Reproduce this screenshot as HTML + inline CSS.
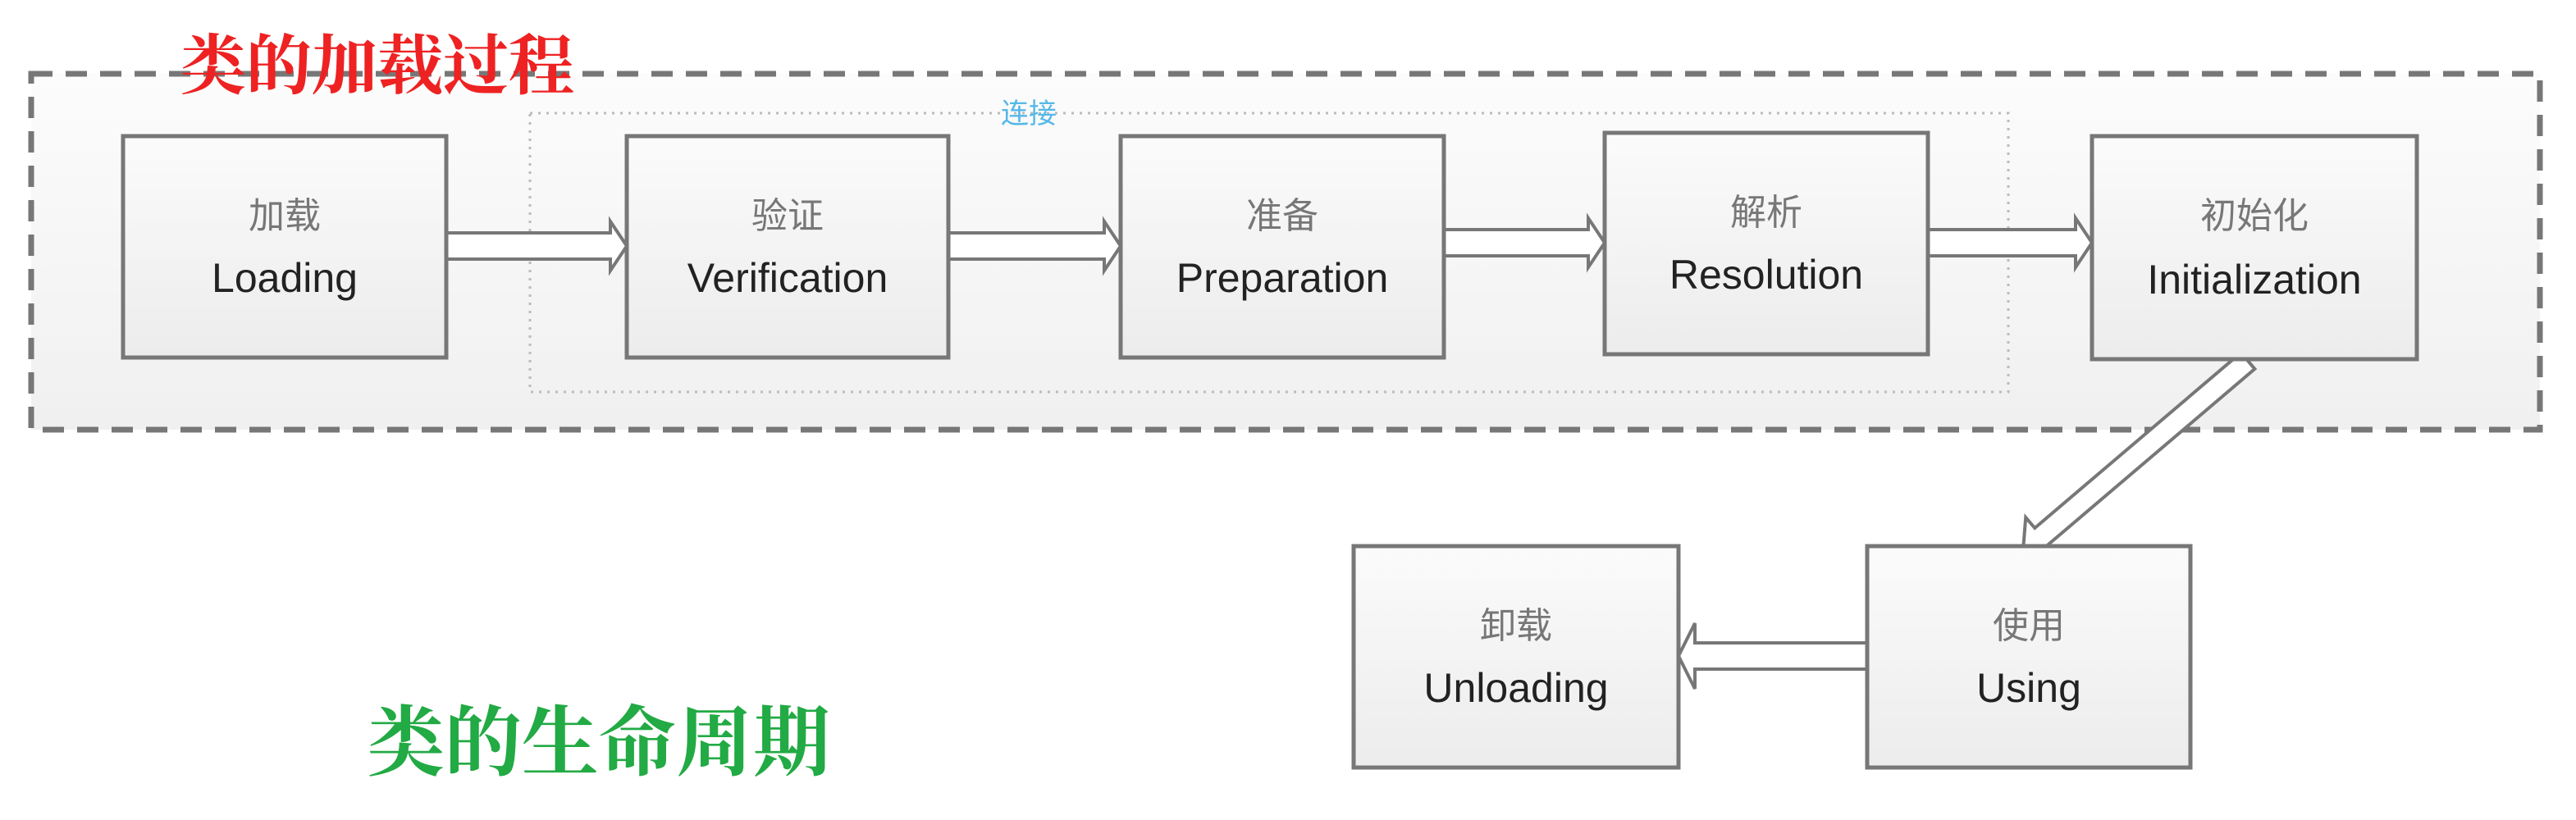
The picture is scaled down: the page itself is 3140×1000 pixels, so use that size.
<!DOCTYPE html>
<html><head><meta charset="utf-8"><style>
html,body{margin:0;padding:0;background:#fff;width:3140px;height:1000px;overflow:hidden}
svg{display:block}
.zh{font-family:"Liberation Sans","Noto Sans CJK SC",sans-serif;font-size:44px;fill:#777}
.en{font-family:"Liberation Sans","Noto Sans CJK SC",sans-serif;font-size:50px;fill:#222}
</style></head><body>
<svg width="3140" height="1000" viewBox="0 0 3140 1000" xmlns="http://www.w3.org/2000/svg">
<defs>
<linearGradient id="g" x1="0" y1="0" x2="0" y2="1"><stop offset="0" stop-color="#fbfbfb"/><stop offset="1" stop-color="#ececec"/></linearGradient>
<linearGradient id="bg" x1="0" y1="0" x2="0" y2="1"><stop offset="0" stop-color="#fcfcfc"/><stop offset="1" stop-color="#f0f0f0"/></linearGradient>
</defs>
<rect x="38" y="90" width="3058" height="434" fill="url(#bg)" stroke="#777" stroke-width="7" stroke-dasharray="26,16"/>
<rect x="646" y="138" width="1802" height="340" fill="none" stroke="#bbb" stroke-width="3" stroke-dasharray="3,7"/>
<text x="1220" y="150" font-family="Liberation Sans,'Noto Sans CJK SC',sans-serif" font-size="34" fill="#55b8e8">连接</text>
<text x="220" y="108" font-family="'Liberation Serif','Noto Serif CJK SC',serif" font-size="80" font-weight="bold" fill="#ee2222">类的加载过程</text>
<text x="448" y="938" font-family="'Liberation Serif','Noto Serif CJK SC',serif" font-size="94" font-weight="bold" fill="#22aa44">类的生命周期</text>
<g fill="#fff" stroke="#777" stroke-width="4">
<polygon points="544,284 744,284 744,270 764,300 744,330 744,316 544,316"/>
<polygon points="1156,284 1346,284 1346,270 1366,300 1346,330 1346,316 1156,316"/>
<polygon points="1760,280 1936,280 1936,266 1956,296 1936,326 1936,312 1760,312"/>
<polygon points="2350,280 2530,280 2530,266 2550,296 2530,326 2530,312 2350,312"/>
<polygon points="2276,784 2066,784 2066,760 2046,800 2066,840 2066,816 2276,816"/>
<g transform="translate(2740,440) rotate(139.6)"><polygon points="0,-13 330,-13 330,-30 360,0 330,30 330,13 0,13"/></g>
</g>
<g fill="url(#g)" stroke="#777" stroke-width="5">
<rect x="150" y="166" width="394" height="270"/>
<rect x="764" y="166" width="392" height="270"/>
<rect x="1366" y="166" width="394" height="270"/>
<rect x="1956" y="162" width="394" height="270"/>
<rect x="2550" y="166" width="396" height="272"/>
<rect x="2276" y="666" width="394" height="270"/>
<rect x="1650" y="666" width="396" height="270"/>
</g>
<g text-anchor="middle">
<text class="zh" x="347" y="278">加载</text><text class="en" x="347" y="356">Loading</text>
<text class="zh" x="960" y="278">验证</text><text class="en" x="960" y="356">Verification</text>
<text class="zh" x="1563" y="278">准备</text><text class="en" x="1563" y="356">Preparation</text>
<text class="zh" x="2153" y="274">解析</text><text class="en" x="2153" y="352">Resolution</text>
<text class="zh" x="2748" y="278">初始化</text><text class="en" x="2748" y="358">Initialization</text>
<text class="zh" x="2473" y="778">使用</text><text class="en" x="2473" y="856">Using</text>
<text class="zh" x="1848" y="778">卸载</text><text class="en" x="1848" y="856">Unloading</text>
</g>
</svg>
</body></html>
